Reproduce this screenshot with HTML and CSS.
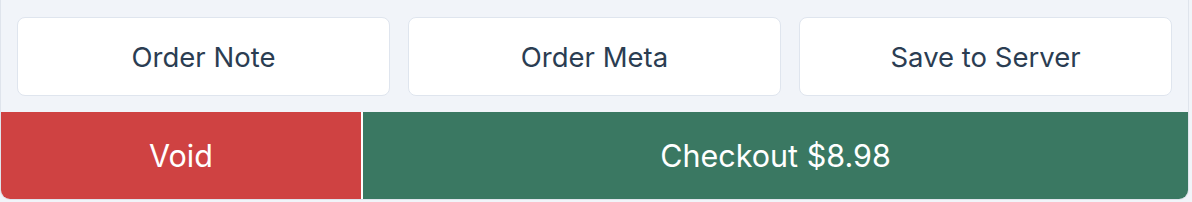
FILE: index.html
```html
<!DOCTYPE html>
<html lang="en">
<head>
    <meta charset="UTF-8">
    <meta name="viewport" content="width=device-width, initial-scale=1.0">
    <title>Order Actions</title>
    <link rel="stylesheet" href="styles.css">
</head>
<body>

    <div class="order-panel">
        <div class="secondary-actions">
            <button class="secondary-btn">Order Note</button>
            <button class="secondary-btn">Order Meta</button>
            <button class="secondary-btn">Save to Server</button>
        </div>
        <div class="primary-actions">
            <button class="void-btn">Void</button>
            <button class="checkout-btn">Checkout $8.98</button>
        </div>
    </div>

</body>
</html>
```

FILE: styles.css
```css
body {
    font-family: Inter, "Noto Sans", sans-serif;
    margin: 0;
    padding: 0;
    background-color: #f1f4f9;
}
.order-panel {
    width: 1187px;
    height: 199px;
    display: flex;
    flex-direction: column;
    background-color: #f1f4f9;
    border: 1px solid #dfe4ec;
    border-top: none;
    border-radius: 0 0 10px 10px;
    overflow: hidden;
}
.secondary-actions {
    display: grid;
    grid-template-columns: repeat(3, 1fr);
    gap: 18px;
    padding: 17px 16px 16px 16px;
}
.secondary-btn {
    height: 79px;
    background-color: #fff;
    border: 1px solid #dfe5ee;
    border-radius: 8px;
    font-family: inherit;
    font-size: 27.5px;
    color: #2b3d52;
    cursor: pointer;
}
.primary-actions {
    flex: 1;
    display: flex;
    gap: 2px;
    background-color: #fff;
}
.primary-actions button {
    border: none;
    font-family: inherit;
    font-size: 30.5px;
    color: #fff;
    cursor: pointer;
}
.void-btn {
    width: 360px;
    background-color: #cf4242;
}
.checkout-btn {
    flex: 1;
    background-color: #3a7862;
}
```
